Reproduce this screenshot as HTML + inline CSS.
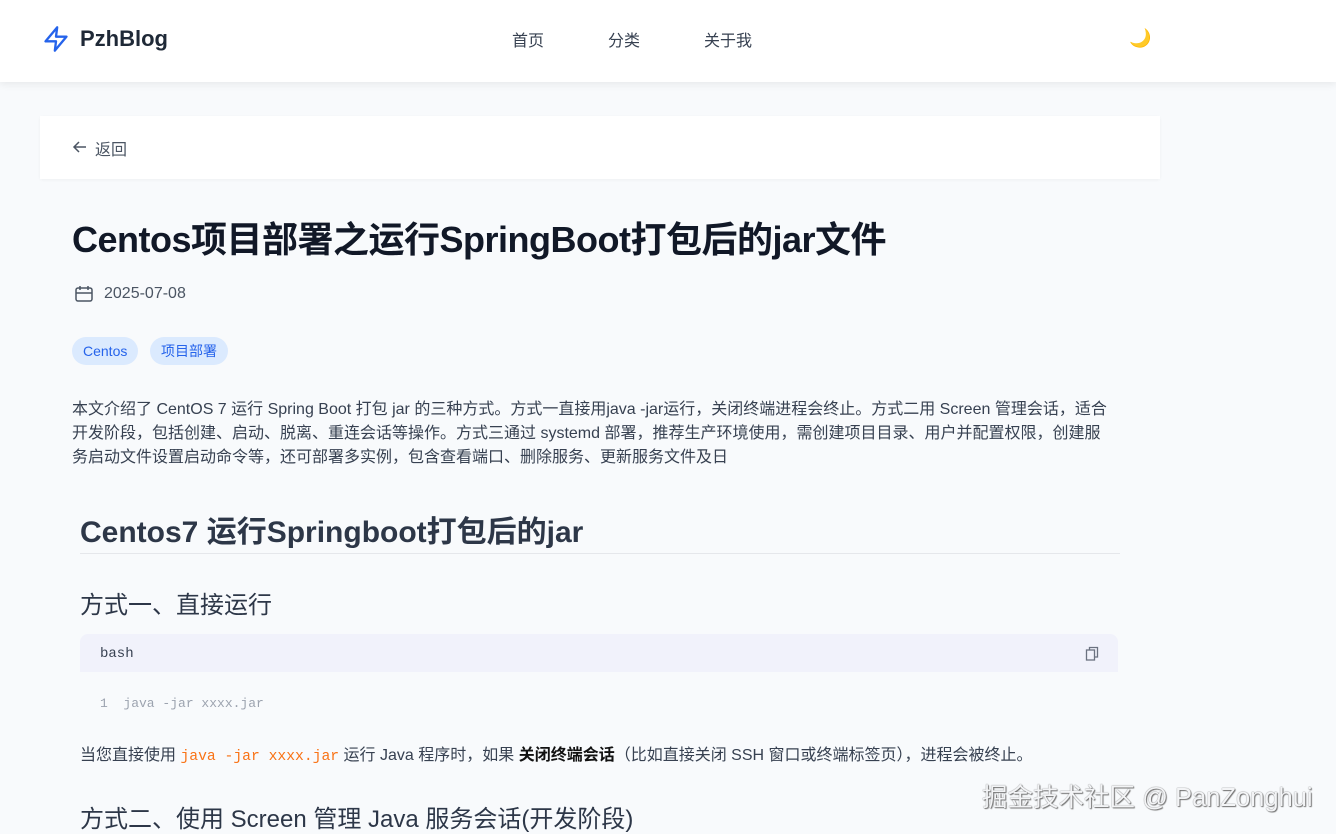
<!DOCTYPE html>
<html><head><meta charset="utf-8"><style>
*{margin:0;padding:0;box-sizing:border-box}
body{width:1336px;height:832px;overflow:hidden;background:#f8fafc;font-family:"Liberation Sans","Noto Sans CJK SC",sans-serif;color:#374151;position:relative}
.hdr{position:absolute;left:0;top:0;width:1336px;height:82px;background:#fff;box-shadow:0 2px 8px rgba(0,0,0,.08)}
.logo{position:absolute;left:42px;top:25px;display:flex;align-items:center;gap:10px;font-size:22px;font-weight:bold;color:#1f2937}
.nav a{position:absolute;top:27px;font-size:16px;color:#374151;text-decoration:none}
.back{position:absolute;left:40px;top:116px;width:1120px;height:63px;background:#fff;box-shadow:0 1px 3px rgba(0,0,0,.04)}
.back span{position:absolute;left:55px;top:20px;font-size:16px;color:#4b5563}
.abs{position:absolute}
.tag{position:absolute;top:337px;height:28px;border-radius:14px;background:#dbeafe;color:#2563eb;font-size:14px;line-height:28px;padding:0 11px}
.code{position:absolute;left:80px;top:634px;width:1038px;height:92px;background:#f8fafc;border-radius:8px}
.ch{height:38px;background:#f1f2fb;border-radius:8px 8px 0 0;font-family:"Liberation Mono",monospace;font-size:14px;line-height:40px;padding-left:20px;color:#374151}
</style></head><body>
<div class="hdr">
 <div class="logo"><svg width="28" height="28" viewBox="0 0 24 24" fill="none" stroke="#2563eb" stroke-width="2" stroke-linejoin="round"><path d="M13 2L3 14h9l-1 8 10-12h-9l1-8z"/></svg>PzhBlog</div>
 <div class="nav"><a style="left:512px">首页</a><a style="left:608px">分类</a><a style="left:704px">关于我</a></div>
 <div class="abs" style="left:1129px;top:28px;font-size:18px">🌙</div>
</div>
<div class="back"><svg class="abs" style="left:32px;top:23px" width="16" height="16" viewBox="0 0 16 16" fill="none" stroke="#4b5563" stroke-width="1.5"><path d="M14 8H2M7 3L2 8l5 5"/></svg><span>返回</span></div>
<div class="abs" style="left:72px;top:211px;font-size:36px;font-weight:bold;color:#111827;letter-spacing:-0.5px">Centos项目部署之运行SpringBoot打包后的jar文件</div>
<svg class="abs" style="left:75px;top:285px" width="18" height="17" viewBox="0 0 18 17" fill="none" stroke="#4b5563" stroke-width="1.5"><rect x="1" y="3" width="16" height="13" rx="2"/><path d="M1 8h16M5 1v4M13 1v4"/></svg>
<div class="abs" style="left:104px;top:285px;font-size:16px;color:#4b5563">2025-07-08</div>
<div class="tag" style="left:72px">Centos</div>
<div class="tag" style="left:150px">项目部署</div>
<div class="abs" style="left:72px;top:398px;width:1042px;font-size:16px;line-height:24px;color:#374151">本文介绍了 CentOS 7 运行 Spring Boot 打包 jar 的三种方式。方式一直接用java -jar运行，关闭终端进程会终止。方式二用 Screen 管理会话，适合开发阶段，包括创建、启动、脱离、重连会话等操作。方式三通过 systemd 部署，推荐生产环境使用，需创建项目目录、用户并配置权限，创建服务启动文件设置启动命令等，还可部署多实例，包含查看端口、删除服务、更新服务文件及日</div>
<div class="abs" style="left:80px;top:507px;font-size:30px;font-weight:bold;color:#2d3748">Centos7 运行Springboot打包后的jar</div>
<div class="abs" style="left:80px;top:553px;width:1040px;height:1px;background:#e5e7eb"></div>
<div class="abs" style="left:80px;top:585px;font-size:24px;color:#2d3748">方式一、直接运行</div>
<div class="code"><div class="ch">bash</div>
<svg class="abs" style="left:1005px;top:12px" width="14" height="15" viewBox="0 0 14 15" fill="none" stroke="#6b7280" stroke-width="1.3"><rect x="1.5" y="4" width="8" height="10"/><path d="M4.5 4V1.5h8V11H9.5"/></svg>
<div style="font-family:'Liberation Mono',monospace;font-size:13px;color:#9ca3af;padding:24px 0 0 20px">1&nbsp;&nbsp;<span>java -jar xxxx.jar</span></div></div>
<div class="abs" style="left:80px;top:741px;font-size:16px;color:#374151">当您直接使用 <span style="font-family:'Liberation Mono',monospace;font-size:14.7px;color:#f97316">java -jar xxxx.jar</span> 运行 Java 程序时，如果 <b style="color:#111">关闭终端会话</b>（比如直接关闭 SSH 窗口或终端标签页），进程会被终止。</div>
<div class="abs" style="left:80px;top:799px;font-size:24px;color:#2d3748">方式二、使用 Screen 管理 Java 服务会话(开发阶段)</div>
<div class="abs" style="left:982px;top:777px;font-size:25.5px;color:#f3f4f6;text-shadow:0 0 1px #555,1px 1px 1px #777">掘金技术社区 @ PanZonghui</div>
</body></html>
